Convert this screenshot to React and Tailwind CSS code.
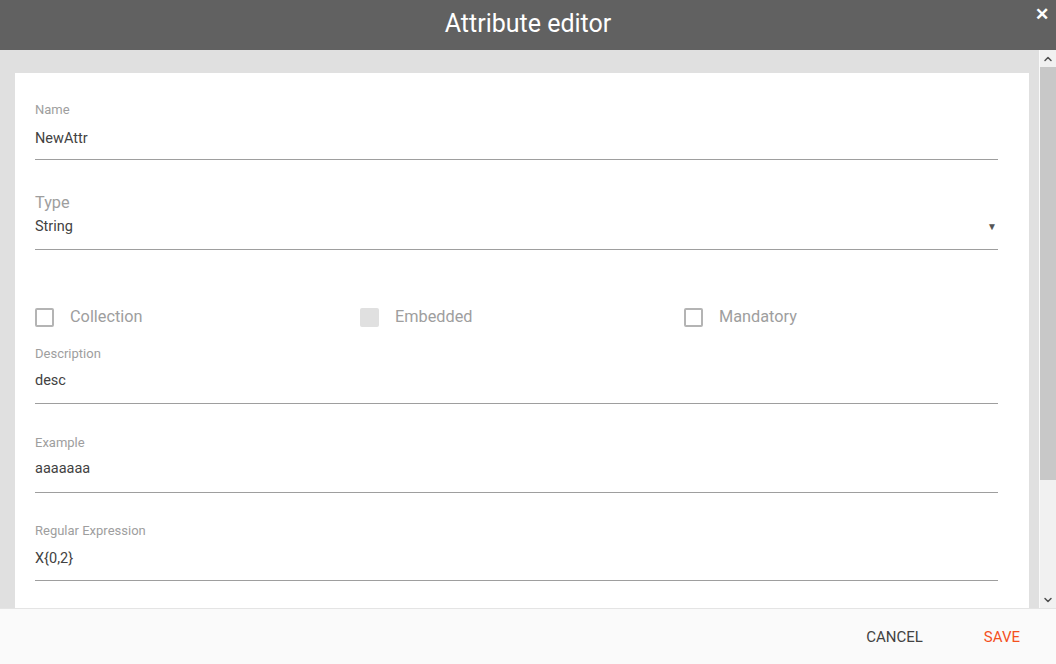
import { ChevronUp, ChevronDown } from 'lucide-react';

const font = { fontFamily: 'Roboto, "Liberation Sans", Arial, sans-serif' };

function Field({ label, value, top, gap, pb }) {
    return (
        <div className={`${top} border-b border-[#9e9e9e]`}>
            <div className="text-[13px] leading-[16px] text-[#9e9e9e]">{label}</div>
            <div className={`${gap} ${pb} text-[14.5px] leading-[20px] text-[#424242]`}>{value}</div>
        </div>
    );
}

function Check({ label, disabled }) {
    return (
        <div className="flex items-center">
            {disabled ? (
                <div className="w-[19px] h-[19px] rounded-[2px] bg-[#e0e0e0]" />
            ) : (
                <div className="w-[19px] h-[19px] rounded-[2px] border-2 border-[#b4b4b4] bg-white" />
            )}
            <span className="ml-[16px] text-[16.3px] leading-[20px] text-[#9e9e9e]">{label}</span>
        </div>
    );
}

export default function App() {
    return (
        <div className="w-[1056px] h-[664px] flex flex-col overflow-hidden bg-white" style={font}>
            {/* Header */}
            <div className="relative h-[50px] shrink-0 bg-[#616161] flex items-center justify-center">
                <h1 className="text-[25px] leading-[30px] text-white -mt-[2px]">Attribute editor</h1>
                <span className="absolute right-[7px] top-[4px] text-white text-[17px] font-bold leading-[20px]">✕</span>
            </div>

            {/* Body */}
            <div className="flex-1 flex min-h-0 bg-[#e0e0e0]">
                <div className="flex-1 pl-[15px] pr-[10px] pt-[23px] overflow-hidden">
                    <div className="bg-white pl-[20px] pr-[31px] pt-[29px] pb-[40px]">
                        <Field label="Name" value="NewAttr" top="" gap="mt-[11px]" pb="pb-[10px]" />

                        {/* Type select */}
                        <div className="mt-[33px] border-b border-[#9e9e9e]">
                            <div className="text-[16.3px] leading-[20px] text-[#9e9e9e]">Type</div>
                            <div className="mt-[4px] pb-[12px] flex items-center justify-between text-[14.5px] leading-[20px] text-[#424242]">
                                <span>String</span>
                                <span className="text-[10px] text-[#555] mr-[1px]">▼</span>
                            </div>
                        </div>

                        {/* Checkboxes */}
                        <div className="mt-[57px] grid grid-cols-[325px_324px_1fr]">
                            <Check label="Collection" />
                            <Check label="Embedded" disabled />
                            <Check label="Mandatory" />
                        </div>

                        <Field label="Description" value="desc" top="mt-[19px]" gap="mt-[9px]" pb="pb-[12px]" />
                        <Field label="Example" value="aaaaaaa" top="mt-[31px]" gap="mt-[8px]" pb="pb-[13px]" />
                        <Field label="Regular Expression" value="X{0,2}" top="mt-[30px]" gap="mt-[10px]" pb="pb-[11px]" />
                    </div>
                </div>

                {/* Scrollbar */}
                <div className="w-[17px] shrink-0 bg-[#f1f1f1] border-l border-[#fafafa] flex flex-col">
                    <div className="h-[17px] flex items-center justify-center text-[#505050]">
                        <ChevronUp size={12} strokeWidth={3} />
                    </div>
                    <div className="h-[413px] bg-[#c8c8c8]" />
                    <div className="flex-1" />
                    <div className="h-[17px] flex items-center justify-center text-[#505050]">
                        <ChevronDown size={12} strokeWidth={3} />
                    </div>
                </div>
            </div>

            {/* Footer */}
            <div className="h-[56px] shrink-0 bg-[#fafafa] border-t border-[#e4e4e4] flex items-center justify-end pr-[36px] gap-[61px]">
                <button className="text-[15px] leading-[20px] text-[#424242]">CANCEL</button>
                <button className="text-[15px] leading-[20px] text-[#f4511e]">SAVE</button>
            </div>
        </div>
    );
}
